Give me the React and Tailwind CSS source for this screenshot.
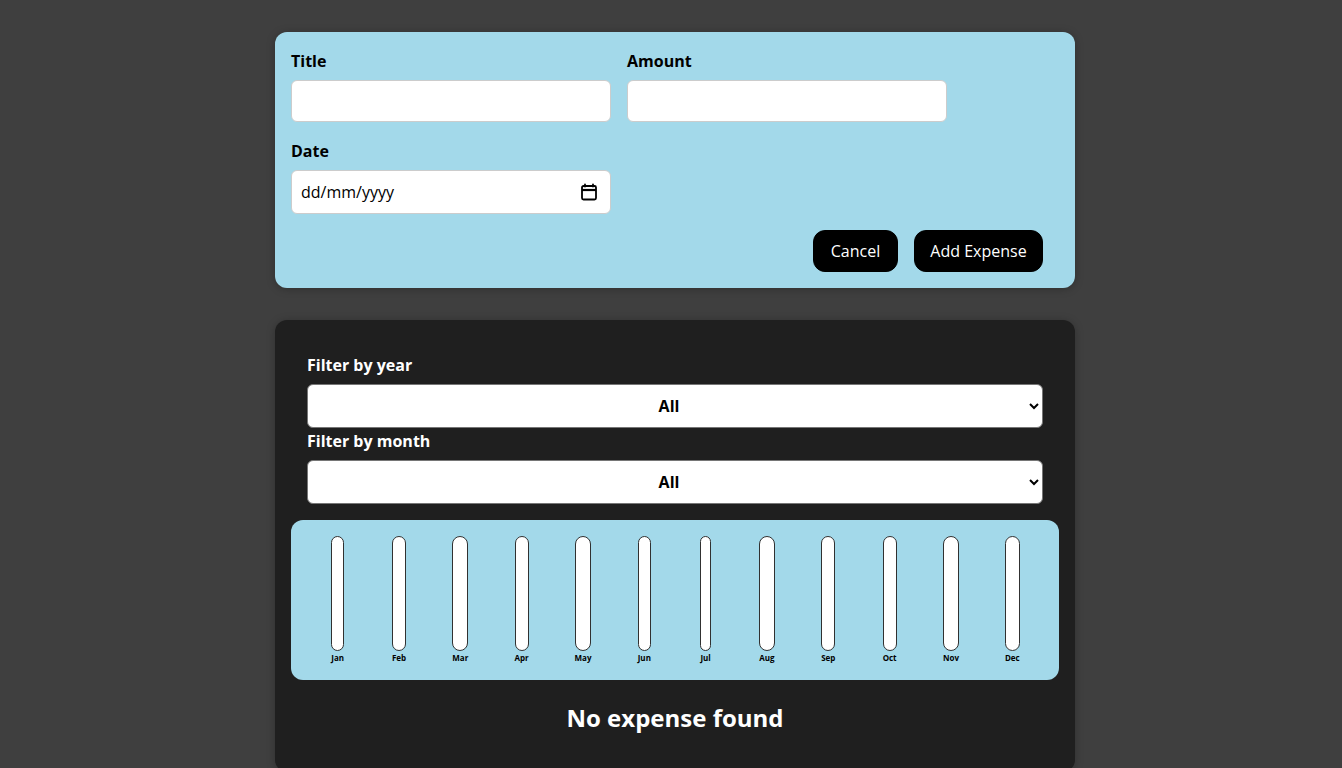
import React from "react";

const months = ["Jan", "Feb", "Mar", "Apr", "May", "Jun", "Jul", "Aug", "Sep", "Oct", "Nov", "Dec"];

function CalendarIcon() {
  return (
    <svg width="18" height="18" viewBox="0 0 18 18" fill="none">
      <path d="M5 1.5v2M13 1.5v2" stroke="#000" strokeWidth="1.8" strokeLinecap="round" />
      <rect x="2" y="3" width="14" height="13.5" rx="1.5" stroke="#000" strokeWidth="1.8" />
      <path d="M2 7h14" stroke="#000" strokeWidth="2.2" />
    </svg>
  );
}

function ChartBar({ label }) {
  return (
    <div className="flex-1 flex justify-center h-full">
      <div className="inline-flex flex-col items-center h-full">
        <div className="w-full flex-1 border border-[#313131] rounded-[12px] bg-white"></div>
        <div className="text-[8px] font-bold text-black leading-[12px] pt-[1px] text-center">{label}</div>
      </div>
    </div>
  );
}

export default function App() {
  return (
    <div className="min-h-screen bg-[#3f3f3f] pt-8 pb-8 pl-2 font-['Open_Sans',sans-serif] text-[16px]">
      {/* New expense form */}
      <div className="w-[800px] mx-auto bg-[#a3d9ea] rounded-[12px] p-4 shadow-[0_1px_8px_rgba(0,0,0,0.25)]">
        <div className="flex flex-wrap gap-4 mb-4">
          <div>
            <label className="block font-bold pt-[1px] mb-[7px] leading-6 text-black">Title</label>
            <input type="text" className="w-[320px] h-[42px] px-2 bg-white border border-[#ccc] rounded-[6px] outline-none" />
          </div>
          <div>
            <label className="block font-bold pt-[1px] mb-[7px] leading-6 text-black">Amount</label>
            <input type="text" className="w-[320px] h-[42px] px-2 bg-white border border-[#ccc] rounded-[6px] outline-none" />
          </div>
          <div>
            <label className="block font-bold pt-[1px] mb-[7px] leading-6 text-black">Date</label>
            <div className="w-[320px] h-[44px] pl-[9px] pr-[12px] bg-white border border-[#ccc] rounded-[6px] flex items-center justify-between text-black">
              <span>dd/mm/yyyy</span>
              <CalendarIcon />
            </div>
          </div>
        </div>
        <div className="flex justify-end">
          <button className="h-[42px] w-[85px] mr-4 bg-black text-white rounded-[12px] border border-black">Cancel</button>
          <button className="h-[42px] w-[129px] mr-4 bg-black text-white rounded-[12px] border border-black">Add Expense</button>
        </div>
      </div>

      {/* Expenses */}
      <div className="w-[800px] mx-auto mt-8 bg-[#1f1f1f] rounded-[12px] p-4 shadow-[0_1px_8px_rgba(0,0,0,0.25)]">
        <div className="px-4 my-4 text-white">
          <label className="block font-bold leading-6 pt-[1px] mb-[7px]">Filter by year</label>
          <select className="w-full h-[44px] bg-white text-black font-bold text-center border border-[#767676] rounded-[6px] px-2">
            <option>All</option>
          </select>
          <label className="block font-bold leading-6 pt-[1px] mb-[7px]">Filter by month</label>
          <select className="w-full h-[44px] bg-white text-black font-bold text-center border border-[#767676] rounded-[6px] px-2">
            <option>All</option>
          </select>
        </div>

        <div className="h-[160px] bg-[#a3d9ea] rounded-[12px] p-4 flex">
          {months.map((m) => (
            <ChartBar key={m} label={m} />
          ))}
        </div>

        <h2 className="text-white text-center font-bold text-[24px] mt-5 mb-5 leading-9">No expense found</h2>
      </div>
    </div>
  );
}
